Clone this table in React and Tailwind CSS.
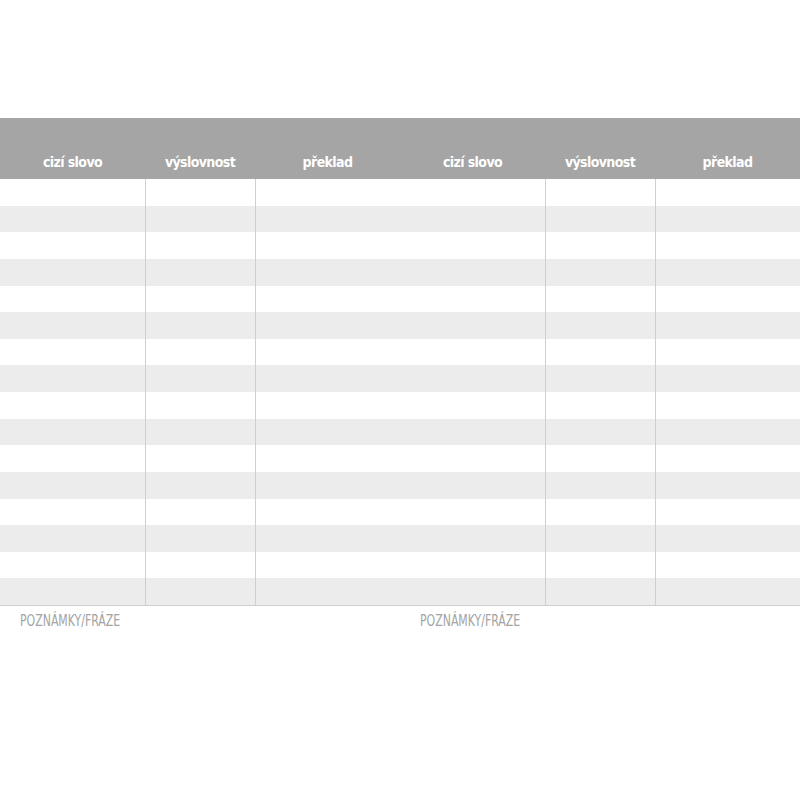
import React from "react";

const rows = Array.from({ length: 16 }, (_, i) => i);

function HeaderHalf() {
  return (
    <div className="grid grid-cols-[145px_110px_145px] items-end pb-[8px]">
      <div className="text-center">cizí slovo</div>
      <div className="text-center">výslovnost</div>
      <div className="text-center">překlad</div>
    </div>
  );
}

function RowHalf() {
  return (
    <div className="grid grid-cols-[145px_110px_145px] h-full">
      <div />
      <div className="border-l border-[#cfcfcf]" />
      <div className="border-l border-[#cfcfcf]" />
    </div>
  );
}

export default function App() {
  return (
    <div className="w-[800px] h-[800px] bg-white flex flex-col">
      <div className="h-[118px]" />
      <div className="h-[61px] bg-[#a4a5a4] grid grid-cols-2 text-white font-bold text-[14px] leading-[17px] font-['DejaVu_Sans_Condensed','Liberation_Sans_Narrow','Liberation_Sans',sans-serif] [font-stretch:condensed] tracking-[-0.6px]">
        <HeaderHalf />
        <HeaderHalf />
      </div>
      <div className="h-[427px] flex flex-col border-b border-[#cfcfcf]">
        {rows.map((i) => (
          <div
            key={i}
            className={`flex-1 grid grid-cols-2 ${i % 2 === 1 ? "bg-[#ebeceb]" : "bg-white"}`}
          >
            <RowHalf />
            <RowHalf />
          </div>
        ))}
      </div>
      <div className="grid grid-cols-2 pt-[5px] text-[16px] leading-[20px] text-[#a3a3a3] font-['DejaVu_Sans_Condensed','Liberation_Sans_Narrow','Liberation_Sans',sans-serif] [font-stretch:condensed] font-light">
        <div className="pl-[20px]">
          <span className="inline-block origin-left scale-x-[0.76]">POZNÁMKY/FRÁZE</span>
        </div>
        <div className="pl-[20px]">
          <span className="inline-block origin-left scale-x-[0.76]">POZNÁMKY/FRÁZE</span>
        </div>
      </div>
    </div>
  );
}
